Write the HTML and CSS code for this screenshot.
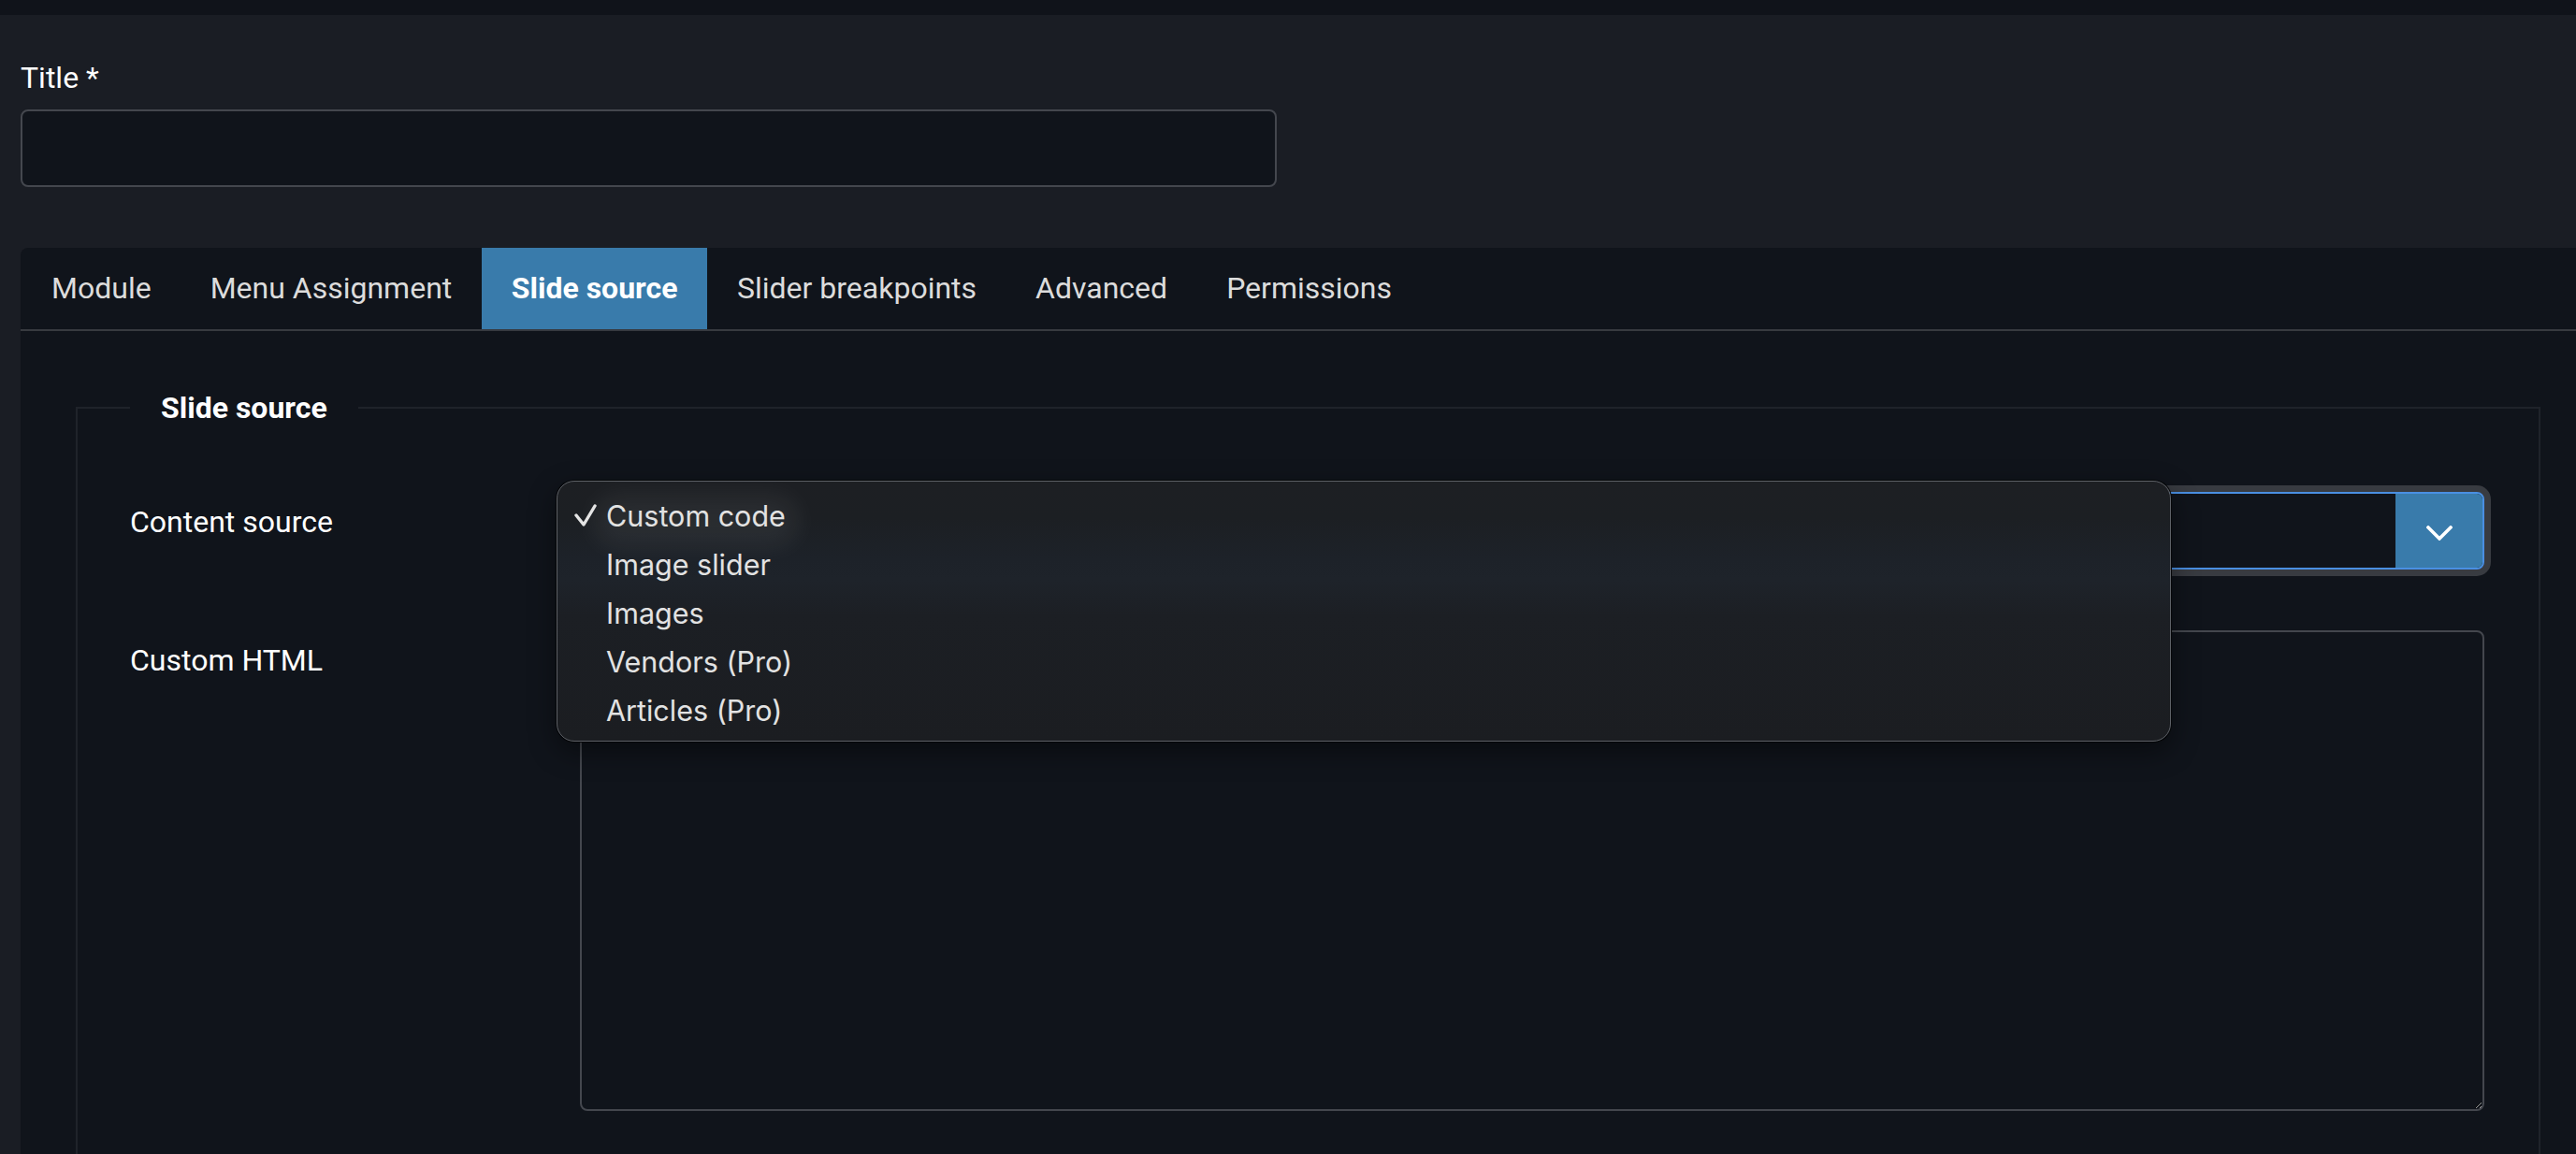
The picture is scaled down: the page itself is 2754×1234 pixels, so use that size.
FILE: index.html
```html
<!DOCTYPE html>
<html lang="en">
<head>
<meta charset="utf-8">
<title>Slide source</title>
<link rel="stylesheet" href="styles.css">
</head>
<body>
<div class="topbar"></div>
<div class="header">
  <label class="field-label" for="title">Title *</label>
  <input class="title-input" id="title" type="text">
</div>
<div class="tabs">
  <div class="tablist">
    <div class="tab">Module</div>
    <div class="tab">Menu Assignment</div>
    <div class="tab active">Slide source</div>
    <div class="tab">Slider breakpoints</div>
    <div class="tab">Advanced</div>
    <div class="tab">Permissions</div>
  </div>
  <div class="panel">
    <fieldset class="fs">
      <legend class="fs-legend">Slide source</legend>
      <div class="row">
        <div class="row-label">Content source</div>
        <div class="control">
          <div class="select">
            <span class="select-value"></span>
            <span class="select-btn">
              <svg class="chevron" width="28" height="16" viewBox="0 0 28 16"><path d="M2 2 L14 14 L26 2" fill="none" stroke="#ffffff" stroke-width="3.6" stroke-linecap="square"/></svg>
            </span>
          </div>
          <div class="menu">
            <div class="menu-glow"></div>
            <div class="menu-item checked">
              <svg class="check" width="24" height="24" viewBox="0 0 24 24"><path d="M2 12 L10 22 L22 2" fill="none" stroke="#e4e4e4" stroke-width="3.4" stroke-linecap="round" stroke-linejoin="round"/></svg>
              <span>Custom code</span>
            </div>
            <div class="menu-item"><span>Image slider</span></div>
            <div class="menu-item"><span>Images</span></div>
            <div class="menu-item"><span>Vendors (Pro)</span></div>
            <div class="menu-item"><span>Articles (Pro)</span></div>
          </div>
        </div>
      </div>
      <div class="row row-area">
        <div class="row-label">Custom HTML</div>
        <div class="control">
          <textarea class="area"></textarea>
        </div>
      </div>
    </fieldset>
  </div>
</div>
</body>
</html>
```
FILE: styles.css
```css
html, body {
  margin: 0;
  padding: 0;
  overflow: hidden;
  height: 1234px;
}
body {
  background: #1a1d24;
  font-family: Roboto, "Liberation Sans", sans-serif;
  color: #ffffff;
}
.topbar {
  height: 16px;
  background: #10131a;
}
.header {
  padding: 43px 22px 0 22px;
  display: flex;
  flex-direction: column;
  align-items: flex-start;
}
.field-label {
  font-size: 32px;
  line-height: 48px;
  color: #ffffff;
}
.title-input {
  margin-top: 10px;
  width: 1343px;
  height: 83px;
  box-sizing: border-box;
  background: #10141b;
  border: 2px solid #44474e;
  border-radius: 8px;
  outline: none;
}
.tabs {
  margin: 65px 0 0 22px;
  background: #10141b;
  border-top-left-radius: 8px;
}
.tablist {
  display: flex;
  border-bottom: 2px solid #373a40;
}
.tab {
  padding: 0 31.5px 0 31.5px;
  height: 87px;
  line-height: 87px;
  font-size: 32px;
  color: #dcdcdc;
}
.tab:first-child {
  padding-left: 33px;
}
.tab.active {
  background: #397bab;
  color: #ffffff;
  font-weight: 700;
  padding: 0 32px;
}
.panel {
  padding: 58px 38px 0 59px;
}
.fs {
  margin: 0;
  border: 2px solid #1f232a;
  padding: 66px 58px 200px 56px;
  min-width: 0;
}
.fs-legend {
  padding: 0 33px;
  font-size: 32px;
  line-height: 48px;
  font-weight: 700;
  color: #ffffff;
}
.row {
  display: flex;
  align-items: flex-start;
}
.row-area {
  margin-top: 65px;
}
.row-label {
  width: 481px;
  flex: none;
  margin-top: 8px;
  font-size: 32px;
  line-height: 48px;
  color: #ffffff;
}
.control {
  flex: 1;
  position: relative;
}
.select {
  display: flex;
  height: 83px;
  box-sizing: border-box;
  border: 2px solid #4a8fe2;
  border-radius: 8px;
  background: #10141b;
  box-shadow: 0 0 0 7px #383b41;
  overflow: hidden;
}
.select-value {
  flex: 1;
}
.select-btn {
  width: 93px;
  flex: none;
  background: #397bab;
  display: flex;
  align-items: center;
  justify-content: center;
  padding-top: 5px;
  box-sizing: border-box;
}
.menu {
  position: absolute;
  z-index: 10;
  left: -25px;
  top: -12px;
  width: 1726px;
  height: 279px;
  box-sizing: border-box;
  padding-top: 11px;
  border-radius: 19px;
  border: 1.5px solid #5d6066;
  box-shadow: 0 0 0 1px #050608, 0 10px 30px rgba(0, 0, 0, 0.45);
  background: linear-gradient(180deg, #1d1f23 0, #1c1f23 14%, #1d2229 30%, #1e232a 38%, #1c1f24 52%, #1b1d21 100%);
  overflow: hidden;
  font-family: Inter, "Noto Sans", sans-serif;
  font-size: 30.5px;
  color: #e2e2e2;
}
.menu-glow {
  position: absolute;
  left: 38px;
  top: 14px;
  width: 220px;
  height: 56px;
  border-radius: 28px;
  background: rgba(255, 255, 255, 0.06);
  filter: blur(12px);
}
.menu-item {
  position: relative;
  height: 52px;
  line-height: 52px;
  padding-left: 52px;
}
.check {
  position: absolute;
  left: 18px;
  top: 13px;
}
.area {
  display: block;
  width: 100%;
  height: 514px;
  box-sizing: border-box;
  background: #10141b;
  border: 2px solid #44474e;
  border-radius: 8px;
  color-scheme: dark;
  outline: none;
  resize: both;
}
```
